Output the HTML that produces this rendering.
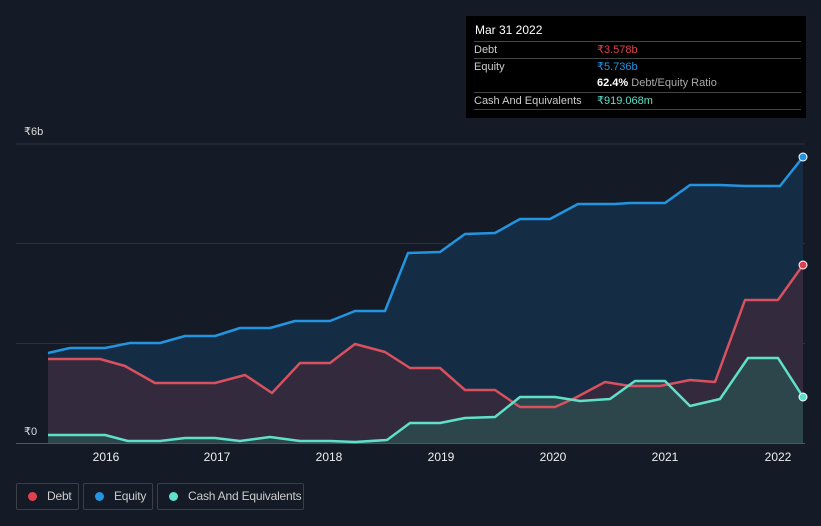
<!DOCTYPE html><html><head><style>
html,body{margin:0;width:821px;height:526px;overflow:hidden}
body{background:#151b26;font-family:"Liberation Sans",sans-serif;position:relative}
.tt{position:absolute;left:466px;top:16px;width:340px;height:102px;background:#000;color:#ccc;font-size:11px}
.row{position:absolute;left:8px;right:5px;border-top:1px solid #444;height:17px;line-height:17px;white-space:nowrap}
.leg{position:absolute;top:483px;height:27px;border:1px solid #3a3f48;border-radius:2px;color:#ccc;font-size:12px;line-height:25px;box-sizing:border-box;white-space:nowrap;letter-spacing:-0.2px}
.leg i{display:inline-block;width:9px;height:9px;border-radius:50%;margin:0 10px 0 11px;vertical-align:-1px}
.yr{position:absolute;top:450px;color:#eee;font-size:12px;width:40px;text-align:center}
</style></head><body>
<svg width="821" height="526" style="position:absolute;left:0;top:0">
<g stroke="#2b313c" stroke-width="1"><line x1="16" y1="144" x2="805" y2="144"/><line x1="16" y1="243.5" x2="805" y2="243.5"/><line x1="16" y1="343.5" x2="805" y2="343.5"/><line x1="16" y1="443.5" x2="805" y2="443.5" stroke="#555"/></g>
<polygon fill="#142d45" points="48,443 48,353 70,348 105,348 130,343 160,343 185,336 215,336 240,328 270,328 295,321 330,321 355,311 385,311 408,253 440,252 465,234 495,233 520,219 550,219 578,204 615,204 630,203 665,203 690,185 720,185 745,186 780,186 803,157 803,443"/>
<polygon fill="#3a2a3c" fill-opacity="0.85" points="48,443 48,359 100,359 125,366 155,383 215,383 245,375 272,393 300,363 330,363 355,344 385,352 410,368 440,368 465,390 495,390 520,407 555,407 575,398 605,382 630,386 660,386 690,380 715,382 745,300 778,300 803,265 803,443"/>
<polygon fill="#2d4b4e" fill-opacity="0.85" points="48,443 48,435 105,435 128,441 160,441 185,438 215,438 240,441 270,437 300,441 330,441 355,442 387,440 410,423 440,423 465,418 495,417 520,397 555,397 580,401 610,399 635,381 665,381 690,406 720,399 748,358 778,358 803,397 803,443"/>
<g fill="none" stroke-width="2.5" stroke-linejoin="round">
<polyline stroke="#2394e0" points="48,353 70,348 105,348 130,343 160,343 185,336 215,336 240,328 270,328 295,321 330,321 355,311 385,311 408,253 440,252 465,234 495,233 520,219 550,219 578,204 615,204 630,203 665,203 690,185 720,185 745,186 780,186 803,157"/>
<polyline stroke="#d9505e" points="48,359 100,359 125,366 155,383 215,383 245,375 272,393 300,363 330,363 355,344 385,352 410,368 440,368 465,390 495,390 520,407 555,407 575,398 605,382 630,386 660,386 690,380 715,382 745,300 778,300 803,265"/>
<polyline stroke="#5fe0c8" points="48,435 105,435 128,441 160,441 185,438 215,438 240,441 270,437 300,441 330,441 355,442 387,440 410,423 440,423 465,418 495,417 520,397 555,397 580,401 610,399 635,381 665,381 690,406 720,399 748,358 778,358 803,397"/>
</g>
<circle cx="803" cy="157" r="4" fill="#2394e0" stroke="#fff" stroke-width="1"/>
<circle cx="803" cy="265" r="4" fill="#e04050" stroke="#fff" stroke-width="1"/>
<circle cx="803" cy="397" r="4" fill="#5fe0c8" stroke="#fff" stroke-width="1"/>
<rect x="16" y="424" width="31" height="16" fill="#151b26"/>
</svg>
<div style="position:absolute;left:24px;top:125px;color:#ddd;font-size:11px">₹6b</div>
<div style="position:absolute;left:24px;top:425px;color:#ddd;font-size:11px">₹0</div>
<div class="yr" style="left:86px">2016</div><div class="yr" style="left:197px">2017</div><div class="yr" style="left:309px">2018</div><div class="yr" style="left:421px">2019</div><div class="yr" style="left:533px">2020</div><div class="yr" style="left:645px">2021</div><div class="yr" style="left:758px">2022</div>
<div class="tt">
<div style="position:absolute;left:9px;top:7px;color:#fff;font-size:12px">Mar 31 2022</div>
<div class="row" style="top:25px">Debt<span style="position:absolute;left:123px;color:#e0414f">₹3.578b</span></div>
<div class="row" style="top:42px">Equity<span style="position:absolute;left:123px;color:#2394e0">₹5.736b</span></div>
<div class="row" style="top:59px;border-top:none"><span style="position:absolute;left:123px;color:#aaa"><b style="color:#fff">62.4%</b> Debt/Equity Ratio</span></div>
<div class="row" style="top:76px">Cash And Equivalents<span style="position:absolute;left:123px;color:#5fe0c8">₹919.068m</span></div>
<div class="row" style="top:93px;height:0"></div>
</div>
<div class="leg" style="left:16px;width:63px"><i style="background:#e0414f"></i>Debt</div>
<div class="leg" style="left:83px;width:70px"><i style="background:#2394e0"></i>Equity</div>
<div class="leg" style="left:157px;width:147px"><i style="background:#5fe0c8"></i>Cash And Equivalents</div>
</body></html>
